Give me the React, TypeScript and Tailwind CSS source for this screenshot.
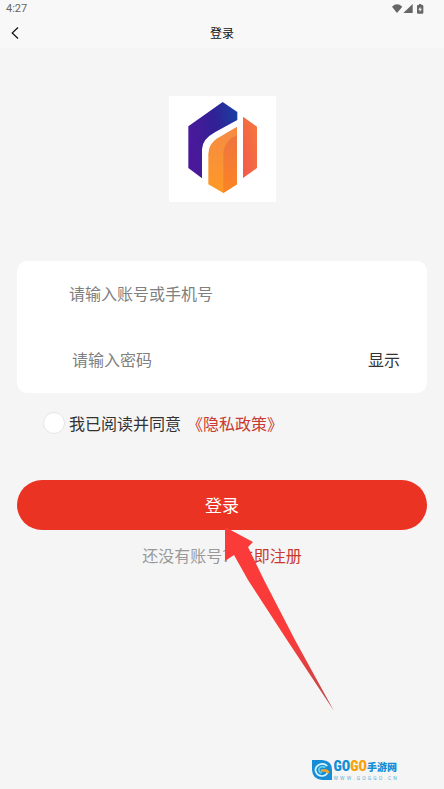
import { useState } from 'react'

function StatusBar() {
  return (
    <div className="flex h-[18px] items-center justify-between pl-[6px] pr-5 text-[#666]">
      <span className="font-[Roboto,sans-serif] text-[11px] leading-[18px]">4:27</span>
      <svg width="32" height="10" viewBox="0 0 96 30" fill="currentColor" className="mb-px" aria-hidden="true">
        <path d="M0 8Q15-6 31 8L15 27Z" />
        <path d="M62 0V27H34Z" />
        <path
          fillRule="evenodd"
          d="M81 0h7v3h3q3 0 3 3v20q0 3-3 3H78q-3 0-3-3V6q0-3 3-3h3ZM85 8l-6 9h4v7l7-10h-5Z"
        />
      </svg>
    </div>
  )
}

function Logo() {
  return (
    <svg viewBox="27 30 321 318" className="h-[106px] w-[107px] bg-white" role="img" aria-label="logo">
      <defs>
        <linearGradient id="violet" x1="0" y1="0.3" x2="1" y2="0">
          <stop offset="0" stopColor="#4a199b" />
          <stop offset="0.5" stopColor="#322095" />
          <stop offset="1" stopColor="#1742a4" />
        </linearGradient>
        <linearGradient id="amber" x1="0" y1="0" x2="0" y2="1">
          <stop offset="0" stopColor="#f58b45" />
          <stop offset="1" stopColor="#ff9926" />
        </linearGradient>
        <linearGradient id="shade" x1="0" y1="0" x2="0" y2="1">
          <stop offset="0" stopColor="#ee7540" />
          <stop offset="1" stopColor="#fb8423" />
        </linearGradient>
        <linearGradient id="coral" x1="0" y1="1" x2="1" y2="0">
          <stop offset="0" stopColor="#f2594a" />
          <stop offset="1" stopColor="#f6783d" />
        </linearGradient>
      </defs>
      <path fill="url(#violet)" d="M188 48L232 78V102L166 138Q126 160 126 190V277L85 246V121Z" />
      <path fill="url(#amber)" d="M231 122V295L190 321L145 295V205Q145 174 172 157Q190 146 231 122Z" />
      <path fill="url(#shade)" d="M231 147V295L190 321V207Q190 165 231 147Z" />
      <path fill="url(#coral)" d="M249 92L291 122V246L249 276Z" />
    </svg>
  )
}

function Pointer() {
  return (
    <svg
      width="111"
      height="186"
      viewBox="0 0 111 186"
      className="pointer-events-none absolute left-1/2 top-[46px] ml-[2px]"
      aria-hidden="true"
    >
      <defs>
        <linearGradient id="pointer" x1="0" y1="0" x2="0" y2="1">
          <stop offset="0.6" stopColor="#fb3a3a" />
          <stop offset="1" stopColor="#b84a4a" />
        </linearGradient>
      </defs>
      <path fill="url(#pointer)" d="M1 1L29 16L24 21L40 54L71 114L110 185L63 114L24 54L10 29L1 35Z" />
    </svg>
  )
}

function SiteMark() {
  return (
    <div className="flex items-center gap-[2px]">
      <svg width="20" height="20" viewBox="0 0 60 60" aria-hidden="true">
        <path fill="#168dd4" d="M0 0H30Q60 2 60 30V60H30Q2 58 0 30Z" />
        <path
          d="M46 18Q35 8 21 14Q8 21 11 34Q16 49 32 48Q42 46 47 39"
          fill="none"
          stroke="#d8f4ff"
          strokeWidth="5"
        />
        <path d="M40 23Q30 16 22 24Q17 35 29 39" fill="none" stroke="#67d2f3" strokeWidth="5" />
        <path d="M26 28H44L53 35L48 41L39 35H27Z" fill="#f6a52b" />
      </svg>
      <div>
        <p className="flex items-center whitespace-nowrap leading-[17px]">
          <span className="font-['Roboto_Condensed',Roboto,sans-serif] text-[14px] font-black text-[#168dd4]">GO</span>
          <span className="font-['Roboto_Condensed',Roboto,sans-serif] text-[14px] font-black text-[#f6a20d]">GO</span>
          <span className="text-[10px] font-black text-[#168dd4]">手游网</span>
        </p>
        <p className="flex justify-between font-[Roboto,sans-serif] text-[5px] leading-[6px] text-[#5eafd8]">
          {'WWW.GOGGO.CN'.split('').map((c, i) => (
            <span key={i}>{c}</span>
          ))}
        </p>
      </div>
    </div>
  )
}

export default function App() {
  const [visible, setVisible] = useState(false)
  const [agreed, setAgreed] = useState(false)

  return (
    <div className="flex min-h-screen flex-col bg-[#f5f5f5] font-['Noto_Sans_CJK_SC',sans-serif] text-base text-[#333]">
      <header className="bg-[#f8f8f8]">
        <StatusBar />
        <div className="grid h-[30px] grid-cols-3 items-center">
          <button type="button" aria-label="返回" className="w-8 pl-[11px]">
            <svg width="8" height="12" viewBox="0 0 8 12" fill="none" stroke="#111" strokeWidth="1.2">
              <path d="M7 0.5L1.2 6L7 11.5" />
            </svg>
          </button>
          <h1 className="text-center text-[12px] leading-4 text-[#111]">登录</h1>
        </div>
      </header>

      <main className="flex flex-col px-[17px] pt-12">
        <div className="flex justify-center">
          <Logo />
        </div>

        <form className="mt-[59px]" onSubmit={(e) => e.preventDefault()}>
          <div className="rounded-[10px] bg-white">
            <div className="flex h-16 items-center pl-[52px] pr-6">
              <input
                type="text"
                aria-label="账号"
                placeholder="请输入账号或手机号"
                className="w-full min-w-0 bg-transparent leading-6 outline-none placeholder:text-[#808080]"
              />
            </div>
            <div className="flex h-[68px] items-center pl-[55px] pr-[27px]">
              <input
                type={visible ? 'text' : 'password'}
                aria-label="密码"
                placeholder="请输入密码"
                className="min-w-0 flex-1 bg-transparent leading-6 outline-none placeholder:text-[#808080]"
              />
              <button type="button" className="leading-6" onClick={() => setVisible(!visible)}>
                显示
              </button>
            </div>
          </div>

          <div className="mt-[18px] flex h-6 items-center pl-[26px]">
            <input
              id="agree"
              type="checkbox"
              checked={agreed}
              onChange={(e) => setAgreed(e.target.checked)}
              className="size-[22px] appearance-none rounded-full border border-[#e6e6e6] bg-white checked:bg-[#eb3323]"
            />
            <label htmlFor="agree" className="ml-1 leading-6">
              我已阅读并同意
            </label>
            <a href="#privacy" className="ml-[6px] leading-6 text-[#c8392f]">
              《隐私政策》
            </a>
          </div>

          <div className="relative mt-[45px]">
            <button
              type="submit"
              className="h-[50px] w-full rounded-full bg-[#eb3323] pb-px text-[17px] leading-6 text-white"
            >
              登录
            </button>
            <p className="mt-[13px] flex justify-center gap-2 leading-6 text-[#999]">
              <span>还没有账号?</span>
              <a href="#register" className="text-[#c8392f]">
                立即注册
              </a>
            </p>
            <Pointer />
          </div>
        </form>
      </main>

      <footer className="mt-auto flex justify-end pb-2 pr-[47px]">
        <SiteMark />
      </footer>
    </div>
  )
}
